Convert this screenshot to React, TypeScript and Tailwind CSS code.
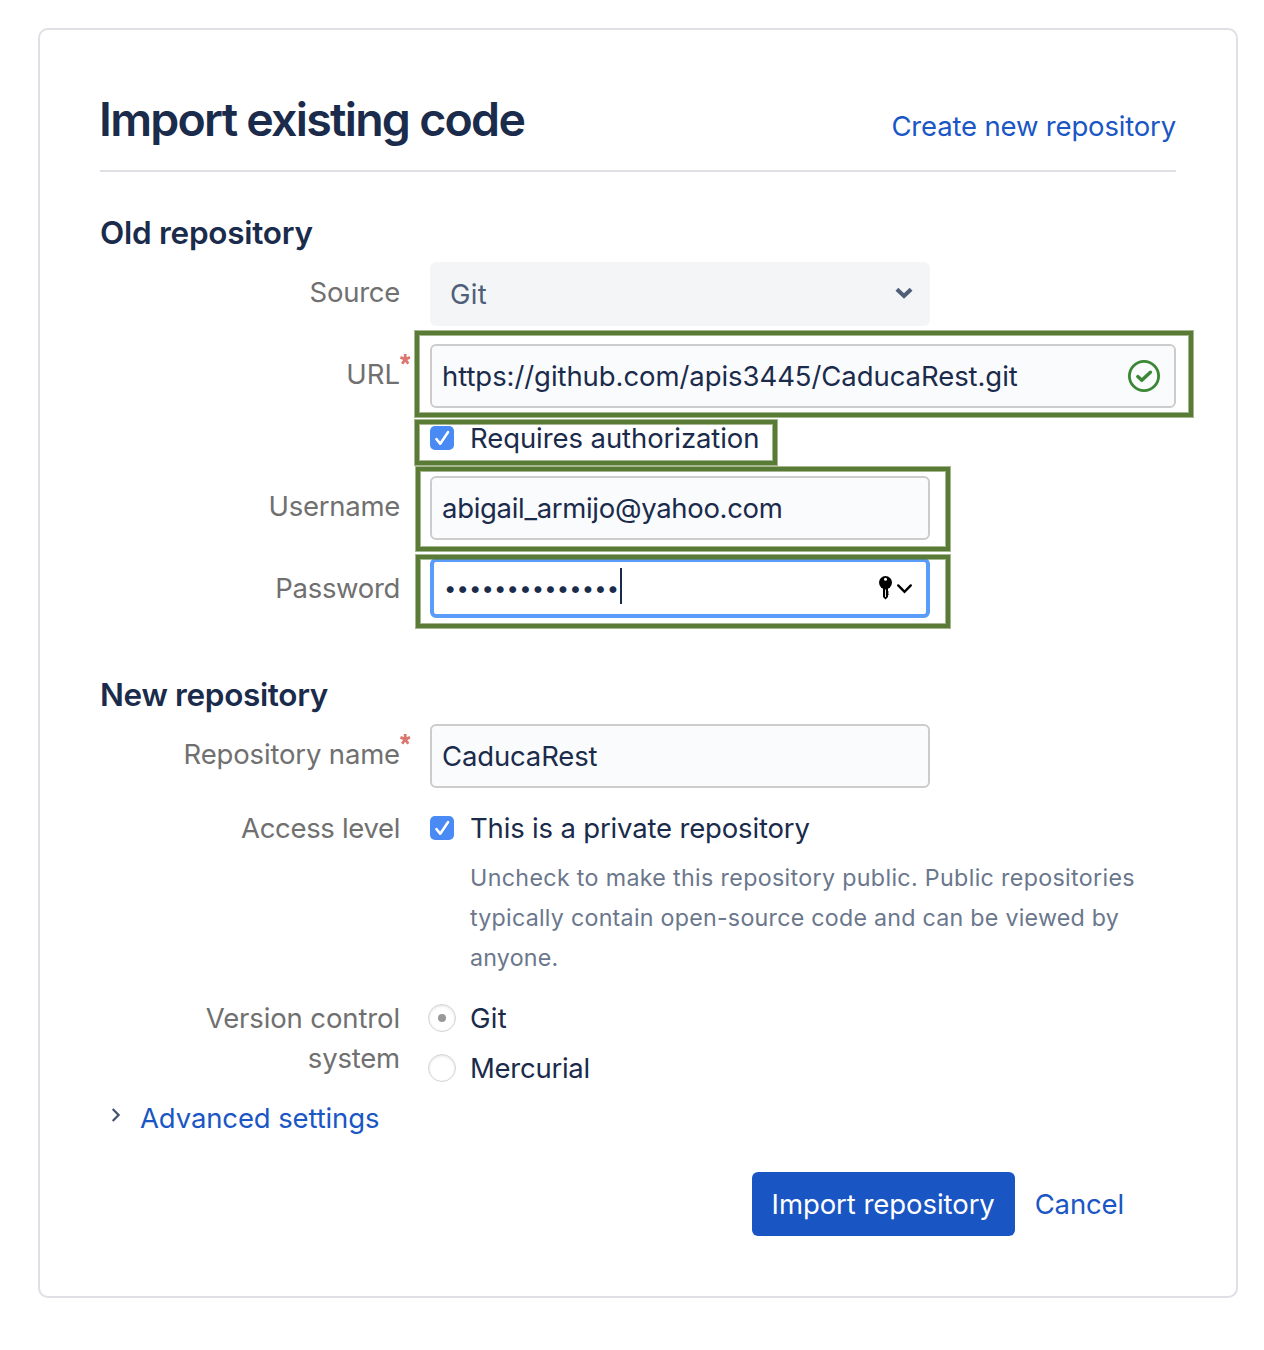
import type { ReactNode } from "react";

function RequiredMark() {
  return (
    <svg className="absolute -top-px left-full h-[12px] w-[11px]" viewBox="0 0 11 12" fill="none">
      <path
        d="M5.2 6.2V1M5.2 6.2L0.4 4.4M5.2 6.2L10 4.4M5.2 6.2L2.2 10.8M5.2 6.2L8.2 10.8"
        stroke="#cf4a3c"
        strokeOpacity="0.75"
        strokeWidth="2.8"
      />
    </svg>
  );
}

function Row({ label, required, className, children }: { label?: ReactNode; required?: boolean; className: string; children: ReactNode }) {
  return (
    <div className={`flex gap-[30px] ${className}`}>
      <div className="w-[300px] shrink-0 text-right text-[#707070]">
        {label && (
          <span className="relative inline-block">
            {label}
            {required && <RequiredMark />}
          </span>
        )}
      </div>
      {children}
    </div>
  );
}

function Highlight({ className }: { className: string }) {
  return (
    <div
      className={`pointer-events-none absolute border-4 border-[#5a7b35] shadow-[0_0_0_1px_rgba(90,123,53,0.55),inset_0_0_0_1px_rgba(90,123,53,0.55)] ${className}`}
    />
  );
}

function Checkbox() {
  return (
    <span className="mt-2 flex h-6 w-6 shrink-0 rounded-[5px] bg-[#4a8af5]">
      <svg className="h-6 w-6" viewBox="0 0 24 24" fill="none">
        <path d="M6.4 13.2L10.3 17.8L18 6.2" stroke="#2f6fe0" strokeWidth="2.6" strokeLinecap="round" strokeLinejoin="round" opacity="0.5" transform="translate(0 1)" />
        <path d="M6.4 13.2L10.3 17.8L18 6.2" stroke="white" strokeWidth="2.6" strokeLinecap="round" strokeLinejoin="round" />
      </svg>
    </span>
  );
}

function Radio({ checked }: { checked?: boolean }) {
  return (
    <span className="mt-1.5 -ml-0.5 flex h-7 w-7 shrink-0 items-center justify-center rounded-full border border-[#d4d4d4] bg-white shadow-[inset_0_1px_3px_rgba(0,0,0,0.12)]">
      {checked && <span className="h-2 w-2 rounded-full bg-[#999999]" />}
    </span>
  );
}

const field = "relative flex h-16 items-center rounded-md border-2 border-[#cccccc] bg-[#fafbfd] px-2.5";

export default function App() {
  return (
    <div className="h-[1350px] w-[1264px] overflow-hidden bg-white pt-7 pl-[38px] font-['Inter','Liberation_Sans',sans-serif] text-[27.5px] leading-[40px] tracking-[-0.27px] text-[#1b2b4b]">
      <main className="h-[1270px] w-[1200px] rounded-[10px] border-2 border-[#dfdfe6] px-[60px] pt-[61px]">
        <header className="flex h-[81px] items-baseline justify-between border-b-2 border-[#dfdfe6]">
          <h1 className="-ml-[1px] text-[46.5px] leading-[56px] font-semibold tracking-[-1.74px]">Import existing code</h1>
          <a className="tracking-[-0.17px] text-[#1a56c4]">Create new repository</a>
        </header>

        <h2 className="mt-[41px] text-[31.5px] font-semibold tracking-[-0.26px]">Old repository</h2>

        <Row label="Source" className="mt-[9px] [&>div:first-child]:pt-2.5">
          <div className="flex h-16 w-[500px] items-center justify-between rounded-md bg-[#f4f5f7] pr-[17px] pl-5 tracking-[0.3px] text-[#505f79]">
            Git
            <svg className="mb-0.5 h-[12px] w-[18px]" viewBox="0 0 18 12" fill="none">
              <path d="M1.9 2.2L9 9L16.1 2.2" stroke="#505f79" strokeWidth="4" />
            </svg>
          </div>
        </Row>

        <Row label={<span className="tracking-[0px]">URL</span>} required className="mt-[18px] [&>div:first-child]:pt-2.5">
          <div className={`${field} w-[746px] tracking-[-0.07px]`}>
            https://github.com/apis3445/CaducaRest.git
            <svg className="ml-auto h-8 w-8 translate-x-[-4px]" viewBox="0 0 32 32" fill="none">
              <circle cx="16" cy="16" r="14.6" stroke="#3a8735" strokeWidth="2.8" />
              <path d="M9.8 16.6L13.8 20.3L22.4 12.2" stroke="#3a8735" strokeWidth="3.4" strokeLinecap="round" strokeLinejoin="round" />
            </svg>
            <Highlight className="-top-[15px] -left-[17px] h-[86px] w-[778px]" />
          </div>
        </Row>

        <Row className="mt-2.5">
          <div className="relative flex gap-4">
            <Checkbox />
            <span className="tracking-[-0.08px]">Requires authorization</span>
            <Highlight className="top-0.5 -left-[15px] h-[45px] w-[362px]" />
          </div>
        </Row>

        <Row label="Username" className="mt-[18px] [&>div:first-child]:pt-2.5">
          <div className={`${field} w-[500px] tracking-[-0.31px]`}>
            abigail_armijo@yahoo.com
            <Highlight className="-top-[11px] -left-4 h-[84px] w-[534px]" />
          </div>
        </Row>

        <Row label={<span className="tracking-[-0.33px]">Password</span>} className="mt-[18px] [&>div:first-child]:pt-2.5">
          <div className="relative flex h-[60px] w-[500px] items-center rounded-md border-4 border-[#5b9cfb] bg-white pl-[10px]">
            <span className="text-[22px] tracking-[0.15px]">••••••••••••••</span>
            <span className="mb-1 ml-px h-9 w-0.5 bg-[#172b4d]" />
            <svg className="mr-[13px] ml-auto h-7 w-9" viewBox="0 0 36 28" fill="none">
              <circle cx="8.5" cy="8.6" r="6.5" fill="black" />
              <circle cx="8.5" cy="5.3" r="1.5" fill="white" />
              <path d="M6 14H11V17L11.8 18L11 19L11.8 20.3L11 21.6V23L8.5 25.4L6 23Z" fill="black" />
              <path d="M8.5 15.5V23" stroke="white" strokeWidth="0.9" />
              <path d="M21.2 11.4L27.5 17.8L33.8 11.4" stroke="black" strokeWidth="2.4" strokeLinecap="round" />
            </svg>
            <Highlight className="-top-[7px] -left-[18px] h-[73px] w-[534px]" />
          </div>
        </Row>

        <h2 className="mt-[57px] text-[31.5px] font-semibold tracking-[-0.34px]">New repository</h2>

        <Row label={<span className="tracking-[-0.16px]">Repository name</span>} required className="mt-[9px] [&>div:first-child]:pt-2.5">
          <div className={`${field} w-[500px] tracking-[-0.15px]`}>CaducaRest</div>
        </Row>

        <Row label={<span className="tracking-[-0.34px]">Access level</span>} className="mt-5">
          <div className="w-[746px]">
            <div className="flex gap-4">
              <Checkbox />
              <span className="tracking-[-0.17px]">This is a private repository</span>
            </div>
            <p className="mt-2.5 pl-10 text-[23.25px] text-[#6b778c]">
              <span className="block whitespace-nowrap tracking-[0.33px]">Uncheck to make this repository public. Public repositories</span>
              <span className="block whitespace-nowrap tracking-[0.24px]">typically contain open-source code and can be viewed by</span>
              <span className="block tracking-[0.2px]">anyone.</span>
            </p>
          </div>
        </Row>

        <Row
          label={
            <>
              <span className="tracking-[-0.12px]">Version control</span>
              <br />
              <span className="tracking-[-0.2px]">system</span>
            </>
          }
          className="mt-5 h-[90px]"
        >
          <div className="flex flex-col gap-2.5">
            <div className="flex gap-3.5">
              <Radio checked />
              <span className="tracking-[0.3px]">Git</span>
            </div>
            <div className="flex gap-3.5">
              <Radio />
              <span>Mercurial</span>
            </div>
          </div>
        </Row>

        <div className="mt-2.5 flex">
          <svg className="mt-[9px] ml-[11px] h-4 w-[10px]" viewBox="0 0 10 16" fill="none">
            <path d="M1.7 2L7.6 8L1.7 14" stroke="#42526e" strokeWidth="2.2" />
          </svg>
          <a className="ml-[19px] tracking-[-0.12px] text-[#1a56c4]">Advanced settings</a>
        </div>

        <div className="mt-[34px] flex justify-end gap-5 pr-[52px]">
          <button className="h-16 w-[263px] rounded-md bg-[#1a55c4] text-center tracking-[-0.06px] text-white">Import repository</button>
          <a className="mt-3 tracking-[-0.14px] text-[#1a56c4]">Cancel</a>
        </div>
      </main>
    </div>
  );
}
